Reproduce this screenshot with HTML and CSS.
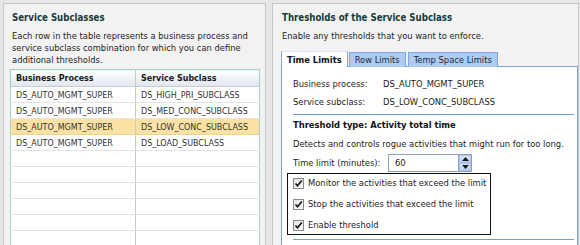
FILE: index.html
```html
<!DOCTYPE html>
<html>
<head>
<meta charset="utf-8">
<link rel="stylesheet" href="styles.css">
</head>
<body>
<div class="page">
  <section class="panel panel-left">
    <h2 class="panel-title">Service Subclasses</h2>
    <p class="panel-desc">Each row in the table represents a business process and service subclass combination for which you can define additional thresholds.</p>
    <table class="grid">
      <thead>
        <tr><th>Business Process</th><th>Service Subclass</th></tr>
      </thead>
      <tbody>
        <tr><td>DS_AUTO_MGMT_SUPER</td><td>DS_HIGH_PRI_SUBCLASS</td></tr>
        <tr><td>DS_AUTO_MGMT_SUPER</td><td>DS_MED_CONC_SUBCLASS</td></tr>
        <tr class="selected"><td>DS_AUTO_MGMT_SUPER</td><td>DS_LOW_CONC_SUBCLASS</td></tr>
        <tr><td>DS_AUTO_MGMT_SUPER</td><td>DS_LOAD_SUBCLASS</td></tr>
        <tr><td></td><td></td></tr>
        <tr><td></td><td></td></tr>
        <tr><td></td><td></td></tr>
        <tr><td></td><td></td></tr>
        <tr><td></td><td></td></tr>
        <tr><td></td><td></td></tr>
      </tbody>
    </table>
  </section>
  <section class="panel panel-right">
    <h2 class="panel-title">Thresholds of the Service Subclass</h2>
    <p class="panel-desc">Enable any thresholds that you want to enforce.</p>
    <div class="tabs">
      <span class="tab tab-active">Time Limits</span>
      <span class="tab">Row Limits</span>
      <span class="tab">Temp Space Limits</span>
    </div>
    <div class="tab-body">
      <div class="info-row"><span class="info-label">Business process:</span><span>DS_AUTO_MGMT_SUPER</span></div>
      <div class="info-row"><span class="info-label">Service subclass:</span><span>DS_LOW_CONC_SUBCLASS</span></div>
      <div class="sep"></div>
      <h3 class="th-type">Threshold type: Activity total time</h3>
      <p class="th-desc">Detects and controls rogue activities that might run for too long.</p>
      <div class="field">
        <span class="field-label">Time limit (minutes):</span>
        <span class="spin">
          <span class="spin-input">60</span>
          <span class="spin-btns">
            <span class="spin-btn"><svg width="7" height="4" viewBox="0 0 7 4"><path d="M3.5 0 L7 4 L0 4 Z" fill="#1a1a1a"/></svg></span>
            <span class="spin-btn"><svg width="7" height="4" viewBox="0 0 7 4"><path d="M0 0 L7 0 L3.5 4 Z" fill="#1a1a1a"/></svg></span>
          </span>
        </span>
      </div>
      <div class="checks">
        <label class="check"><span class="box"><svg width="9" height="9" viewBox="0 0 9 9"><path d="M1.5 4.5 L3.5 6.8 L7.8 1.5" fill="none" stroke="#111" stroke-width="1.6"/></svg></span>Monitor the activities that exceed the limit</label>
        <label class="check"><span class="box"><svg width="9" height="9" viewBox="0 0 9 9"><path d="M1.5 4.5 L3.5 6.8 L7.8 1.5" fill="none" stroke="#111" stroke-width="1.6"/></svg></span>Stop the activities that exceed the limit</label>
        <label class="check"><span class="box"><svg width="9" height="9" viewBox="0 0 9 9"><path d="M1.5 4.5 L3.5 6.8 L7.8 1.5" fill="none" stroke="#111" stroke-width="1.6"/></svg></span>Enable threshold</label>
      </div>
      <div class="sep sep-bottom"></div>
    </div>
  </section>
</div>
</body>
</html>
```

FILE: styles.css
```css
html, body {
  margin: 0;
  padding: 0;
  background: #e6e6e6;
  overflow: hidden;
}
body {
  font-family: "DejaVu Sans Condensed", "DejaVu Sans", sans-serif;
  font-stretch: condensed;
  font-size: 9.3px;
  line-height: 12px;
  color: #222;
  width: 580px;
  height: 245px;
}
.page {
  display: flex;
  gap: 6px;
  padding: 3px 0 0 3px;
}
.panel {
  background: #f2f2f2;
  border: 1px solid #c6c6c6;
  height: 270px;
  box-sizing: border-box;
}
.panel-left {
  width: 263px;
  padding: 0 6px;
}
.panel-right {
  width: 307px;
  padding: 0 0 0 8px;
}
.panel-title {
  margin: 7px 0 0 2px;
  font-size: 9.6px;
  line-height: 13px;
  font-weight: bold;
  color: #173a3a;
}
.panel-right .panel-title { margin-left: 1px; }
.panel-desc {
  margin: 6px 0 0 2px;
}
.panel-right .panel-desc { margin-left: 1px; }
.grid {
  margin-top: 3px;
  width: 250px;
  border-collapse: collapse;
  background: #fff;
  border: 1px solid #9ed2ca;
  font-size: 8.9px;
  table-layout: fixed;
}
.grid th, .grid td {
  height: 15px;
  padding: 0 0 0 5px;
  text-align: left;
  white-space: nowrap;
  overflow: hidden;
  border-bottom: 1px solid #e3e3e3;
}
.grid th:first-child, .grid td:first-child {
  width: 119px;
  border-right: 1px solid #c9c9c9;
}
.grid th {
  height: 16px;
  font-weight: bold;
  color: #1a1a1a;
  background: linear-gradient(#ffffff, #dfe6ed);
  border-bottom: 1px solid #c3ced8;
}
.grid td { color: #333; }
.grid .selected td {
  background: #fbe2a4;
  border-bottom-color: #f0d38e;
}
.tabs {
  display: flex;
  margin-top: 9px;
  height: 15px;
  position: relative;
  z-index: 1;
}
.tab {
  box-sizing: border-box;
  height: 15px;
  padding: 0 5px;
  line-height: 14px;
  background: #aecbf0;
  border: 1px solid #7ea9dd;
  border-bottom: none;
  margin-left: 1px;
  margin-top: 1px;
  color: #1a2a3a;
}
.tab:nth-child(3) { margin-left: 2px; }
.tab-active {
  background: #fff;
  font-weight: bold;
  color: #111;
  margin-left: 0;
  margin-top: 0;
  height: 16px;
  line-height: 15px;
  border-color: #7ea9dd;
  border-top-color: #d8e4f2;
  padding: 0 5px;
}
.tab-body {
  box-sizing: border-box;
  width: 297px;
  background: #fff;
  border: 1px solid #7aa6da;
  padding: 8px 3px 0 11px;
  height: 200px;
}
.info-row {
  display: flex;
  line-height: 18px;
}
.info-label { width: 90px; }
.sep {
  margin-top: 3px;
  height: 1px;
  background: #6f9fd6;
}
.th-type {
  margin: 4px 0 0 0;
  font-size: 9.3px;
  line-height: 12px;
  font-weight: bold;
  color: #111;
}
.th-desc { margin: 7px 0 0 0; }
.field {
  display: flex;
  align-items: center;
  margin-top: 4px;
  height: 18px;
}
.field-label { width: 95px; }
.spin { display: flex; height: 18px; }
.spin-input {
  box-sizing: border-box;
  width: 70px;
  height: 18px;
  border: 1px solid #8ea3bb;
  border-right: none;
  background: #fff;
  padding-left: 6px;
  line-height: 16px;
}
.spin-btns {
  display: flex;
  flex-direction: column;
  width: 14px;
  height: 18px;
  box-sizing: border-box;
  border: 1px solid #8ea3bb;
  background: #fff;
}
.spin-btn {
  flex: 1;
  display: flex;
  align-items: center;
  justify-content: center;
  background: linear-gradient(#dfeafc, #b9cff5);
  border: 1px solid #a9c1ea;
}
.checks {
  margin: 1px 0 0 -6px;
  width: 204px;
  box-sizing: border-box;
  border: 1px solid #111;
  padding: 3px 0 3px 5px;
  display: flex;
  flex-direction: column;
  gap: 9px;
}
.check {
  display: flex;
  align-items: center;
  gap: 4px;
  height: 12px;
  color: #222;
}
.box {
  box-sizing: border-box;
  width: 11px;
  height: 11px;
  border: 1px solid #8a8a8a;
  background: linear-gradient(135deg, #e4e4e0, #fbfbfb);
  display: flex;
  align-items: center;
  justify-content: center;
}
.sep-bottom { margin-top: 4px; }
```
